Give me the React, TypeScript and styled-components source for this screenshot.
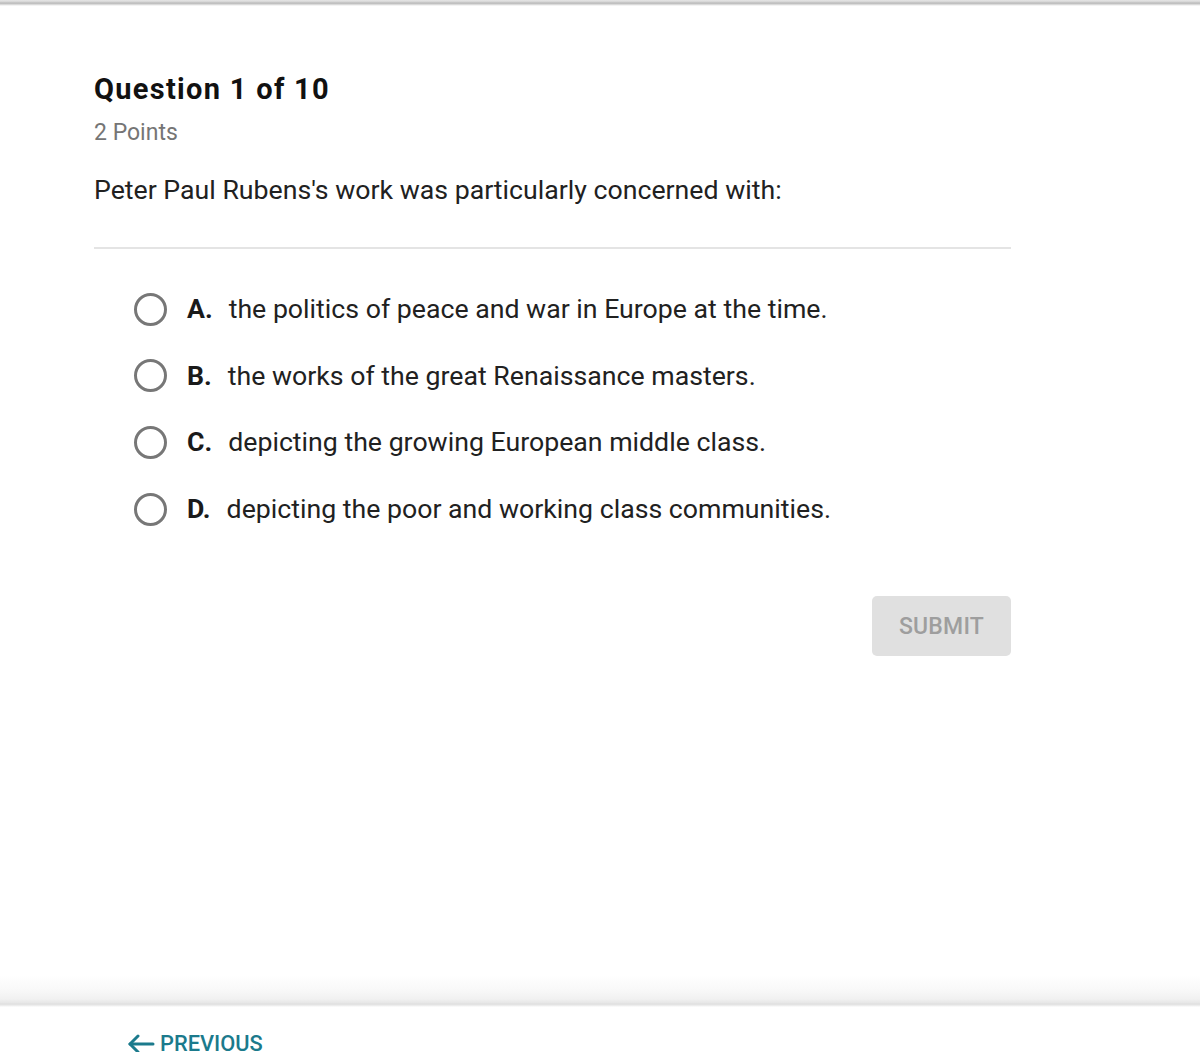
import React from "react";
import styled, { createGlobalStyle } from "styled-components";

const Global = createGlobalStyle`
  html, body { margin: 0; padding: 0; background: #ffffff; }
  body { font-family: Roboto, "Liberation Sans", Arial, sans-serif; color: #212121; }
  * { box-sizing: border-box; }
`;

const Page = styled.div`
  width: 1200px;
  height: 1052px;
  display: flex;
  flex-direction: column;
  overflow: hidden;
  background: #fff;
`;

const TopEdge = styled.div`
  height: 6px;
  flex-shrink: 0;
  background: linear-gradient(#e6e6e6 0px, #d4d4d4 2px, #b9b9b9 3px, #c8c8c8 4px, #ececec 5px, #fafafa 6px);
`;

const Main = styled.main`
  flex: 1;
  padding: 61px 189px 0 94px;
  display: flex;
  flex-direction: column;
`;

const Title = styled.h1`
  margin: 0;
  font-size: 29px;
  font-weight: 700;
  letter-spacing: 1.3px;
  color: #111;
  line-height: 44px;
`;

const Points = styled.div`
  margin-top: 7px;
  font-size: 23px;
  color: #757575;
  line-height: 30px;
`;

const Prompt = styled.p`
  margin: 24px 0 0;
  font-size: 26.7px;
  color: #212121;
  line-height: 36px;
`;

const Divider = styled.hr`
  margin: 39px 0 0;
  border: 0;
  height: 2px;
  background: #e4e4e4;
`;

const Options = styled.div`
  margin-top: 42px;
  padding-left: 40px;
  display: flex;
  flex-direction: column;
  gap: 30.7px;
`;

const Option = styled.label`
  display: flex;
  align-items: center;
  height: 36px;
  cursor: pointer;
`;

const Radio = styled.span`
  width: 33px;
  height: 33px;
  border-radius: 50%;
  border: 3px solid #777;
  flex-shrink: 0;
  margin-right: 20px;
`;

const Letter = styled.span`
  font-size: 26.7px;
  font-weight: 700;
  color: #1a1a1a;
  margin-right: 16px;
`;

const OptionText = styled.span`
  font-size: 26.7px;
  color: #212121;
`;

const Actions = styled.div`
  margin-top: 69px;
  display: flex;
  justify-content: flex-end;
`;

const SubmitButton = styled.button`
  width: 139px;
  height: 60px;
  border: 0;
  border-radius: 5px;
  background: #e0e0e0;
  color: #9e9e9e;
  font-family: Roboto, "Liberation Sans", Arial, sans-serif;
  font-size: 23px;
  font-weight: 500;
  letter-spacing: 0.2px;
`;

const BottomShade = styled.div`
  height: 32px;
  flex-shrink: 0;
  background: linear-gradient(#ffffff 0px, #f9f9f9 14px, #f1f1f1 24px, #e6e6e6 28px, #dedede 29px, #f2f2f2 31px, #ffffff 32px);
`;

const Footer = styled.footer`
  height: 45px;
  flex-shrink: 0;
  padding: 25px 0 0 127px;
`;

const PrevLink = styled.a`
  display: inline-flex;
  align-items: center;
  gap: 5px;
  color: #1b7a8c;
  font-size: 21.8px;
  font-weight: 500;
  text-decoration: none;
  line-height: 24px;
`;

const options = [
  { key: "A", text: "the politics of peace and war in Europe at the time." },
  { key: "B", text: "the works of the great Renaissance masters." },
  { key: "C", text: "depicting the growing European middle class." },
  { key: "D", text: "depicting the poor and working class communities." },
];

export default function App() {
  return (
    <Page>
      <Global />
      <TopEdge />
      <Main>
        <Title>Question 1 of 10</Title>
        <Points>2 Points</Points>
        <Prompt>Peter Paul Rubens's work was particularly concerned with:</Prompt>
        <Divider />
        <Options>
          {options.map((o) => (
            <Option key={o.key}>
              <Radio />
              <Letter>{o.key}.</Letter>
              <OptionText>{o.text}</OptionText>
            </Option>
          ))}
        </Options>
        <Actions>
          <SubmitButton>SUBMIT</SubmitButton>
        </Actions>
      </Main>
      <BottomShade />
      <Footer>
        <PrevLink href="#">
          <svg width="28" height="22" viewBox="0 0 28 22" fill="none" stroke="#1b7a8c" strokeWidth="3" strokeLinecap="round" strokeLinejoin="round">
            <path d="M26 11H3" />
            <path d="M11 3L3 11L11 19" />
          </svg>
          PREVIOUS
        </PrevLink>
      </Footer>
    </Page>
  );
}
